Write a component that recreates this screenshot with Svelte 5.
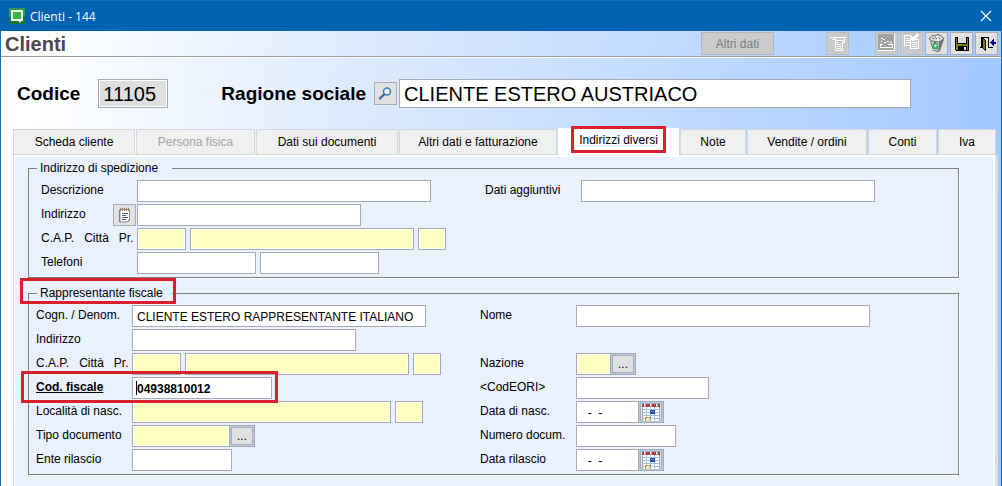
<script>
let tabs = ['Scheda cliente', 'Persona fisica', 'Dati sui documenti', 'Altri dati e fatturazione', 'Indirizzi diversi', 'Note', 'Vendite / ordini', 'Conti', 'Iva'];
let activeTab = $state('Indirizzi diversi');

let codice = $state('11105');
let ragioneSociale = $state('CLIENTE ESTERO AUSTRIACO');

// w = larghezza campo, ro = campo giallo (solo decodifica), btn = pulsante a destra
let spedizione = $state({
    left: [
        { id: 'sp-descr', label: 'Descrizione', fields: [{ w: 294, value: '' }] },
        { id: 'sp-ind', label: 'Indirizzo', note: true, fields: [{ w: 224, value: '' }] },
        { id: 'sp-cap', label: 'C.A.P.   Città   Pr.', fields: [{ w: 49, ro: true, value: '' }, { w: 224, ro: true, value: '' }, { w: 28, ro: true, value: '' }] },
        { id: 'sp-tel', label: 'Telefoni', fields: [{ w: 119, value: '' }, { w: 119, value: '' }] }
    ],
    right: [
        { id: 'sp-agg', label: 'Dati aggiuntivi', fields: [{ w: 294, value: '' }] }
    ]
});

let rappresentante = $state({
    left: [
        { id: 'rf-cogn', label: 'Cogn. / Denom.', fields: [{ w: 294, value: 'CLIENTE ESTERO RAPPRESENTANTE ITALIANO' }] },
        { id: 'rf-ind', label: 'Indirizzo', fields: [{ w: 224, value: '' }] },
        { id: 'rf-cap', label: 'C.A.P.   Città   Pr.', fields: [{ w: 49, ro: true, value: '' }, { w: 224, ro: true, value: '' }, { w: 28, ro: true, value: '' }] },
        { id: 'rf-cf', label: 'Cod. fiscale', strong: true, fields: [{ w: 140, value: '04938810012' }] },
        { id: 'rf-loc', label: 'Località di nasc.', fields: [{ w: 259, ro: true, value: '' }, { w: 28, ro: true, value: '' }] },
        { id: 'rf-doc', label: 'Tipo documento', fields: [{ w: 97, ro: true, btn: 'dots', value: '' }] },
        { id: 'rf-ente', label: 'Ente rilascio', fields: [{ w: 100, value: '' }] }
    ],
    right: [
        { id: 'rf-nome', label: 'Nome', fields: [{ w: 294, value: '' }] },
        null,
        { id: 'rf-naz', label: 'Nazione', fields: [{ w: 34, ro: true, btn: 'dots', value: '' }] },
        { id: 'rf-eori', label: '<CodEORI>', fields: [{ w: 133, value: '' }] },
        { id: 'rf-nasc', label: 'Data di nasc.', fields: [{ w: 62, btn: 'cal', value: '  -  -' }] },
        { id: 'rf-num', label: 'Numero docum.', fields: [{ w: 100, value: '' }] },
        { id: 'rf-ril', label: 'Data rilascio', fields: [{ w: 62, btn: 'cal', value: '  -  -' }] }
    ]
});
</script>

{#snippet column(rows)}
    <div class="column">
        {#each rows as row}
            {#if row}
                <div class="row">
                    <div class="caption">
                        <label for={row.id} class:strong={row.strong}>{row.label}</label>
                        {#if row.note}
                            <button class="tool note" aria-label="Elenco indirizzi">
                                <svg width="15" height="17" viewBox="0 0 15 17">
                                    <path d="M3 2.5h9.500v10.500l-2 2H3z" fill="#fbfbfb" stroke="#8b8f99"/>
                                    <path d="M2.5 3v12" stroke="#5d7fb5"/>
                                    <path d="M3.500 1v3M5.500 1v3M7.500 1v3M9.500 1v3M11.500 1v3" stroke="#a08040"/>
                                    <path d="M5 6.500h6M5 8.500h4M5 10.500h6M5 12.500h4" stroke="#5c6570"/>
                                    <path d="M10 15l3-3" stroke="#777"/>
                                </svg>
                            </button>
                        {/if}
                    </div>
                    <div class="controls">
                        {#each row.fields as field, i}
                            <div class="field" class:combo={field.btn}>
                                <input
                                    id={i === 0 ? row.id : null}
                                    aria-label={i === 0 ? null : row.label + ' ' + (i + 1)}
                                    type="text"
                                    class:ro={field.ro}
                                    class:strong={row.strong}
                                    style="width: {field.w}px"
                                    bind:value={field.value}
                                />
                                {#if row.strong}<span class="caret"></span>{/if}
                                {#if field.btn === 'dots'}
                                    <button class="pick" aria-label="Cerca">...</button>
                                {:else if field.btn === 'cal'}
                                    <button class="pick" aria-label="Calendario">
                                        <svg width="18" height="18" viewBox="0 0 18 18" shape-rendering="crispEdges">
                                            <rect y="3" width="18" height="15" fill="#fff"/>
                                            <path d="M0 6.500h18M0 9.500h18M0 12.500h18M0 15.500h18M4.500 4v14M8.500 4v14M12.500 4v14" stroke="#9cc7e4"/>
                                            <path d="M.5 4v14M17.500 4v14" stroke="#a9a9a9"/>
                                            <path d="M0 1h18v3H0z" fill="#b9a7a7"/>
                                            <path d="M0 1h2v3H0zM4 1h4v3H4zM10 1h4v3h-4zM16 1h2v3h-2z" fill="#b33a36"/>
                                            <path d="M2 1h1v2H2zM8 1h1v2H8zM14 1h1v2h-1z" fill="#fff"/>
                                            <rect x="8" y="7" width="5" height="4" fill="#1f4f91"/>
                                            <rect x="9" y="8" width="3" height="1" fill="#6da5dc"/>
                                            <rect x="3" y="14" width="6" height="4" fill="#b49a62"/>
                                            <rect x="4" y="15" width="4" height="3" fill="#f3e4b4"/>
                                        </svg>
                                    </button>
                                {/if}
                            </div>
                        {/each}
                    </div>
                    {#if row.strong}<span class="mark mark-row"></span>{/if}
                </div>
            {:else}
                <div class="row"></div>
            {/if}
        {/each}
    </div>
{/snippet}

<div class="window">
    <header class="titlebar">
        <svg class="logo" width="16" height="16" viewBox="0 0 16 16">
            <rect width="16" height="16" rx="1" fill="#2f9d55"/>
            <path d="M0 9h16v6a1 1 0 0 1-1 1H1a1 1 0 0 1-1-1z" fill="#17733b"/>
            <path d="M3 3h10v9H3z" fill="#39b54a" stroke="#e9fbe9" stroke-width="2"/>
            <path d="M8 11h5l-2 4z" fill="#fff"/>
        </svg>
        <span class="title">Clienti - 144</span>
        <button class="close" aria-label="Chiudi">
            <svg width="12" height="12" viewBox="0 0 12 12"><path d="M1 1l10 10M11 1L1 11" stroke="#fff" stroke-width="1.200"/></svg>
        </button>
    </header>

    <div class="toolbar">
        <h1>Clienti</h1>
        <button class="other" disabled>Altri dati</button>
        <button class="tool print" disabled aria-label="Stampa">
            <svg width="21" height="21" viewBox="0 0 21 21" shape-rendering="crispEdges" fill="none" stroke="#fff">
                <path d="M3 4.500h16M5 6.500h3M17.500 5v5M8.500 5v3M9 7.500h7M8 9.500h3M15 9.500h3M8.500 9v9M15.500 9v9M8 17.500h8M10 11.500h4M10 13.500h4M10 15.500h4"/>
            </svg>
        </button>
        <div class="tools">
            <button class="tool" disabled aria-label="Immagine">
                <svg width="21" height="21" viewBox="0 0 21 21" shape-rendering="crispEdges">
                    <rect x="2" y="1" width="16" height="16" fill="#a2a2a2"/>
                    <path d="M18.500 1v17M2 17.500h17M4 11.500h3M12 11.500h5M4 14.500h12M4 12v3M16.500 11v4M5 5.500h2M7 6.500h2M5 8.500h1M8 9.500h2M11 8.500h2M14 9.500h2" fill="none" stroke="#fff"/>
                </svg>
            </button>
            <button class="tool" disabled aria-label="Copia">
                <svg width="21" height="21" viewBox="0 0 21 21" shape-rendering="crispEdges" fill="none" stroke="#fff">
                    <path d="M3 2.500h5M3.500 2v10M3 12.500h6M5 5.500h3M5 7.500h4M5 9.500h4M9.500 6v9M9 15.500h9M17.500 7v9M14 6.500h4M11 9.500h5M11 11.500h5M11 13.500h5"/>
                    <path d="M9 2l3 4 5-5M10 5l2 2 5-4" stroke-width="1.500"/>
                </svg>
            </button>
            <button class="tool" aria-label="Elimina">
                <svg width="21" height="21" viewBox="0 0 21 21">
                    <path d="M4 6l3 11.500 6 1.500 5-13-7-2z" fill="#cfd3d1"/>
                    <path d="M13 9l5-3-4 12-2 1z" fill="#6f7572"/>
                    <path d="M3 6l3-3.500 3 .5 2-1.500 4 1 3 3.500-5 3-7-1z" fill="#e6e6e6" stroke="#666"/>
                    <path d="M4.500 8l3 9.500 4.500 1M6 5l3 1M9 4l2 2M13 4l1 2" fill="none" stroke="#777"/>
                    <path d="M7 12l2-2.500 2.500 2M11.500 12.500l-.5 3-3-.5M7 12.500l1 2.500" fill="none" stroke="#10a53c" stroke-width="1.500"/>
                </svg>
            </button>
            <button class="tool" aria-label="Salva">
                <svg width="21" height="21" viewBox="0 0 21 21" shape-rendering="crispEdges">
                    <path d="M4 4h14v14H5l-1-1z" fill="#000"/>
                    <path d="M5 5h12v12H5z" fill="#808000"/>
                    <path d="M6 4h10v7H6z" fill="#000"/>
                    <path d="M7 4h8v6H7z" fill="#dcdcdc"/>
                    <path d="M7 13h9v5H7z" fill="#000"/>
                    <path d="M13 14h2v3h-2z" fill="#dcdcdc"/>
                </svg>
            </button>
            <button class="tool" aria-label="Esci">
                <svg width="21" height="21" viewBox="0 0 21 21" shape-rendering="crispEdges">
                    <path d="M4 14.500h2M5.500 4v11M5 4.500h8M12.500 4v11M12 14.500h5" fill="none" stroke="#000"/>
                    <path d="M6.500 4.500l3 3v10l-3-3z" fill="#808000" stroke="#000"/>
                    <path d="M14 9.500l4-4v3h2v2h-2v3z" fill="#000080"/>
                </svg>
            </button>
        </div>
    </div>

    <div class="client">
        <label class="big code-label" for="codice">Codice</label>
        <input id="codice" class="code" type="text" bind:value={codice} />
        <label class="big" for="ragione">Ragione sociale</label>
        <button class="tool search" aria-label="Cerca cliente">
            <svg width="15" height="15" viewBox="0 0 15 15">
                <circle cx="9" cy="5.500" r="3.500" fill="#e6f3fd" stroke="#3f78b5" stroke-width="1.500"/>
                <path d="M6 8.500l-4 4" stroke="#3a5f94" stroke-width="2" stroke-linecap="round"/>
            </svg>
        </button>
        <input id="ragione" class="name" type="text" bind:value={ragioneSociale} />
    </div>

    <div class="tabs" role="tablist">
        {#each tabs as tab}
            <button
                role="tab"
                class="tab"
                class:active={tab === activeTab}
                aria-selected={tab === activeTab}
                disabled={tab === 'Persona fisica'}
                onclick={() => (activeTab = tab)}
            >
                {tab}
                {#if tab === 'Indirizzi diversi'}<span class="mark mark-tab"></span>{/if}
            </button>
        {/each}
    </div>

    <main class="panel">
        <fieldset class="shipping">
            <legend>Indirizzo di spedizione</legend>
            <div class="columns">
                {@render column(spedizione.left)}
                {@render column(spedizione.right)}
            </div>
        </fieldset>
        <fieldset class="fiscal">
            <legend>Rappresentante fiscale<span class="mark mark-legend"></span></legend>
            <div class="columns">
                {@render column(rappresentante.left)}
                {@render column(rappresentante.right)}
            </div>
        </fieldset>
    </main>
</div>

<style>
:global(body) {
    margin: 0;
    font-family: "Liberation Sans", Arial, sans-serif;
    font-size: 12px;
    color: #000;
}
* {
    box-sizing: border-box;
}
button, input {
    font-family: inherit;
    font-size: 12px;
    color: #000;
    margin: 0;
    border-radius: 0;
}
button {
    display: flex;
    align-items: center;
    justify-content: center;
    padding: 0;
}
input {
    height: 22px;
    padding: 2px 4px 0;
    border: 1px solid #a5aab4;
    background: #fff;
    outline: none;
}
svg {
    flex: none;
}

.window {
    display: flex;
    flex-direction: column;
    min-height: 100vh;
    border: solid #1a6cb0;
    border-width: 0 1px;
    background: linear-gradient(95deg, #fff 3%, #deebfe 34%, #c0daff 66%, #9fc6ff 100%);
}

.titlebar {
    display: flex;
    align-items: center;
    height: 31px;
    margin: 0 -1px;
    padding: 0 9px;
    background: #0063b1;
    border-top: 1px solid #1a70b8;
    color: #fff;
}
.title {
    margin-left: 5px;
    font-family: "Open Sans", "Segoe UI", sans-serif;
    font-size: 12px;
}
.close {
    width: 14px;
    height: 24px;
    margin-left: auto;
    border: none;
    background: none;
}

.toolbar {
    display: flex;
    align-items: center;
    height: 27px;
    padding: 0 3px 1px 4px;
    border-bottom: 1px solid #fff;
    box-shadow: inset 0 -1px #9a9a9f;
}
h1 {
    margin: 0;
    font-size: 20px;
    line-height: 24px;
    color: #4a4a4a;
}
.tool {
    width: 23px;
    height: 23px;
    border: 1px solid #a9adb3;
    background: #e1e1e1;
}
.tool:disabled, .other {
    border-color: #b9bcc1;
    background: #cacaca;
}
.other {
    width: 73px;
    height: 23px;
    margin-left: auto;
    border: 1px solid #b2b5ba;
    color: #7d7d7d;
}
.print {
    margin: 0 26px 0 52px;
}
.tools {
    display: flex;
    gap: 2px;
}

.client {
    display: flex;
    align-items: center;
    padding: 21px 90px 20px 16px;
}
.big {
    font-size: 19px;
    font-weight: bold;
    white-space: nowrap;
}
.code, .name {
    height: 29px;
    font-size: 20px;
}
.code {
    width: 70px;
    margin: 0 53px 0 18px;
    background: #dfdfdf;
    box-shadow: inset 0 0 0 1px #fff;
}
.search {
    margin: 0 2px 0 8px;
}
.name {
    flex: 1;
    min-width: 0;
}

.tabs {
    display: grid;
    grid-template-columns: 122fr 119fr 142fr 158fr 121fr 66fr 120fr 69fr 58fr;
    column-gap: 1px;
    align-items: end;
    height: 27px;
    margin: 0 5px 0 12px;
}
.tab {
    position: relative;
    height: 26px;
    border: 1px solid #d3d8df;
    border-bottom-color: #d5dae2;
    background: #f0f0f0;
    white-space: nowrap;
}
.tab:disabled {
    color: #a5a5a5;
}
.tab.active {
    height: 27px;
    padding-bottom: 3px;
    border-color: #fff;
    background: #fff;
}

.panel {
    flex: 1;
    margin: 0 3px 0 12px;
    padding: 5px 36px 10px 14px;
    border: solid #d9dde4;
    border-width: 0 3px 0 1px;
    background: #e9f1fd;
    box-shadow: inset 1px 2px #fff, inset -2px 0 #fff;
}
fieldset {
    min-width: 0;
    margin: 0 0 7px;
    padding: 4px 0 1px;
    border: 1px solid #7c7f84;
    box-shadow: 1px 1px #fff;
}
.shipping {
    padding-left: 12px;
}
.fiscal {
    padding-left: 7px;
}
legend {
    position: relative;
    min-width: 135px;
    padding: 0 0 0 3px;
    line-height: 16px;
}
.shipping legend {
    margin-left: -4px;
}
.fiscal legend {
    margin-left: 1px;
}
.columns {
    display: grid;
    grid-template-columns: 444px 1fr;
}
.row {
    position: relative;
    display: flex;
    height: 24px;
}
.caption {
    display: flex;
    justify-content: space-between;
    flex: none;
    width: 96px;
    padding-right: 1px;
}
.caption label {
    line-height: 20px;
    white-space: pre;
}
.caption label.strong {
    font-weight: bold;
    text-decoration: underline;
}
.note {
    height: 22px;
}
.controls {
    display: flex;
    gap: 4px;
}
.field {
    position: relative;
    display: flex;
    height: 22px;
}
.ro {
    background: #ffffc0;
    box-shadow: inset 0 0 0 1px #fff;
}
input.strong {
    font-weight: bold;
}
.combo input {
    border-right: none;
}
.pick {
    width: 26px;
    height: 22px;
    border: 1px solid #9fabbb;
    background: #e0e0e0;
    box-shadow: inset 0 0 0 1px #b9cade, inset 0 0 0 2px #a3aebf;
}
.caret {
    position: absolute;
    left: 4px;
    top: 4px;
    width: 1px;
    height: 14px;
    background: #000;
}

/* riquadri rossi di evidenza */
.mark {
    position: absolute;
    z-index: 1;
    border: 3px solid #d9202c;
    pointer-events: none;
}
.mark-tab {
    inset: -3px 12px 1px;
}
.mark-legend {
    inset: -7px -4px -3px -17px;
}
.mark-row {
    left: -15px;
    top: -6px;
    width: 257px;
    height: 32px;
}
</style>
